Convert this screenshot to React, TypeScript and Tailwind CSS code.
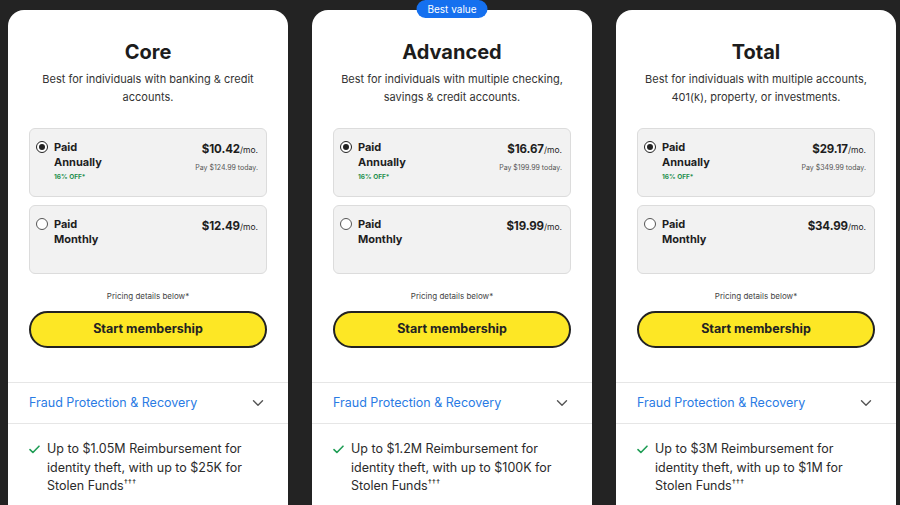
import React from "react";

type Plan = {
  name: string;
  blurb: string[];
  annual: string;
  today: string;
  monthly: string;
  reimb: string;
  stolen: string;
  badge?: string;
};

const plans: Plan[] = [
  {
    name: "Core",
    blurb: ["Best for individuals with banking & credit", "accounts."],
    annual: "$10.42",
    today: "Pay $124.99 today.",
    monthly: "$12.49",
    reimb: "Up to $1.05M Reimbursement for",
    stolen: "identity theft, with up to $25K for",
  },
  {
    name: "Advanced",
    blurb: ["Best for individuals with multiple checking,", "savings & credit accounts."],
    annual: "$16.67",
    today: "Pay $199.99 today.",
    monthly: "$19.99",
    reimb: "Up to $1.2M Reimbursement for",
    stolen: "identity theft, with up to $100K for",
    badge: "Best value",
  },
  {
    name: "Total",
    blurb: ["Best for individuals with multiple accounts,", "401(k), property, or investments."],
    annual: "$29.17",
    today: "Pay $349.99 today.",
    monthly: "$34.99",
    reimb: "Up to $3M Reimbursement for",
    stolen: "identity theft, with up to $1M for",
  },
];

function Radio({ checked }: { checked: boolean }) {
  return (
    <span
      className={
        "mt-[1px] flex h-[12px] w-[12px] shrink-0 items-center justify-center rounded-full border bg-white " +
        (checked ? "border-[#222]" : "border-[#555]")
      }
    >
      {checked && <span className="h-[6px] w-[6px] rounded-full bg-[#222]" />}
    </span>
  );
}

function Option({
  checked,
  label,
  price,
  off,
  today,
}: {
  checked: boolean;
  label: string;
  price: string;
  off?: string;
  today?: string;
}) {
  return (
    <div className="flex h-[69px] justify-between rounded-[6px] border border-[#dcdcdc] bg-[#f2f2f2] pl-[6px] pr-[8px] pt-[11px]">
      <div className="flex gap-[6px]">
        <Radio checked={checked} />
        <div>
          <div className="text-[11px] font-bold leading-[15px] text-[#1e1e1e]">
            Paid
            <br />
            {label}
          </div>
          {off && (
            <div className="mt-[2px] text-[6.5px] font-bold leading-[10px] text-[#1f8f4e]">{off}</div>
          )}
        </div>
      </div>
      <div className="flex flex-col items-end">
        <div className="leading-[15px] text-[#1e1e1e]">
          <span className="text-[11.5px] font-bold tracking-[-0.01em]">{price}</span>
          <span className="text-[8.5px]">/mo.</span>
        </div>
        {today && <div className="mt-[5px] text-[7px] leading-[10px] text-[#555]">{today}</div>}
      </div>
    </div>
  );
}

function Card({ plan }: { plan: Plan }) {
  return (
    <div className="relative rounded-t-[16px] bg-white pb-[40px] pt-[28px]">
      {plan.badge && (
        <div className="absolute left-1/2 top-[-10px] flex h-[18px] w-[71px] -translate-x-1/2 items-center justify-center rounded-full bg-[#1570ef] text-[10px] leading-none text-white">
          {plan.badge}
        </div>
      )}
      <div className="px-[21px]">
        <div className="text-center text-[20px] font-bold leading-[28px] text-[#1c1c1c]">{plan.name}</div>
        <div className="mt-[4px] text-center text-[11px] leading-[18px] text-[#333]">
          {plan.blurb[0]}
          <br />
          {plan.blurb[1]}
        </div>
        <div className="mt-[22px] flex flex-col gap-[8px]">
          <Option checked label="Annually" price={plan.annual} off="16% OFF*" today={plan.today} />
          <Option checked={false} label="Monthly" price={plan.monthly} />
        </div>
        <div className="mt-[16px] text-center text-[8px] leading-[12px] text-[#444]">Pricing details below*</div>
        <button className="mt-[9px] flex h-[37px] w-full items-center justify-center rounded-full border-2 border-[#222] bg-[#fde725] text-[12.5px] font-bold text-[#222]">
          Start membership
        </button>
      </div>
      <div className="mt-[34px] flex h-[42px] items-center justify-between border-y border-[#e6e6e6] pl-[21px] pr-[24px]">
        <span className="text-[12.5px] text-[#2a7be4]">Fraud Protection &amp; Recovery</span>
        <svg width="12" height="8" viewBox="0 0 12 8" fill="none">
          <path d="M1.5 1.8 6 6.2l4.5-4.4" stroke="#555" strokeWidth="1.4" strokeLinecap="round" strokeLinejoin="round" />
        </svg>
      </div>
      <div className="mt-[16px] flex gap-[7px] pl-[21px] pr-[16px]">
        <svg className="mt-[5px] shrink-0" width="11" height="9" viewBox="0 0 11 9" fill="none">
          <path d="M1 4.6 3.9 7.5 10 1.2" stroke="#1f9d55" strokeWidth="1.6" strokeLinecap="round" strokeLinejoin="round" />
        </svg>
        <div className="text-[12.5px] leading-[18.5px] text-[#2b2b2b]">
          {plan.reimb}
          <br />
          {plan.stolen}
          <br />
          Stolen Funds<sup className="text-[8.5px]">†††</sup>
        </div>
      </div>
    </div>
  );
}

export default function App() {
  return (
    <div
      className="h-[505px] w-[900px] overflow-hidden bg-[#232323] pl-[8px] pt-[10px]"
      style={{ fontFamily: "Inter, 'Noto Sans', sans-serif" }}
    >
      <div className="grid grid-cols-[280px_280px_280px] gap-[24px]">
        {plans.map((p) => (
          <Card key={p.name} plan={p} />
        ))}
      </div>
    </div>
  );
}
